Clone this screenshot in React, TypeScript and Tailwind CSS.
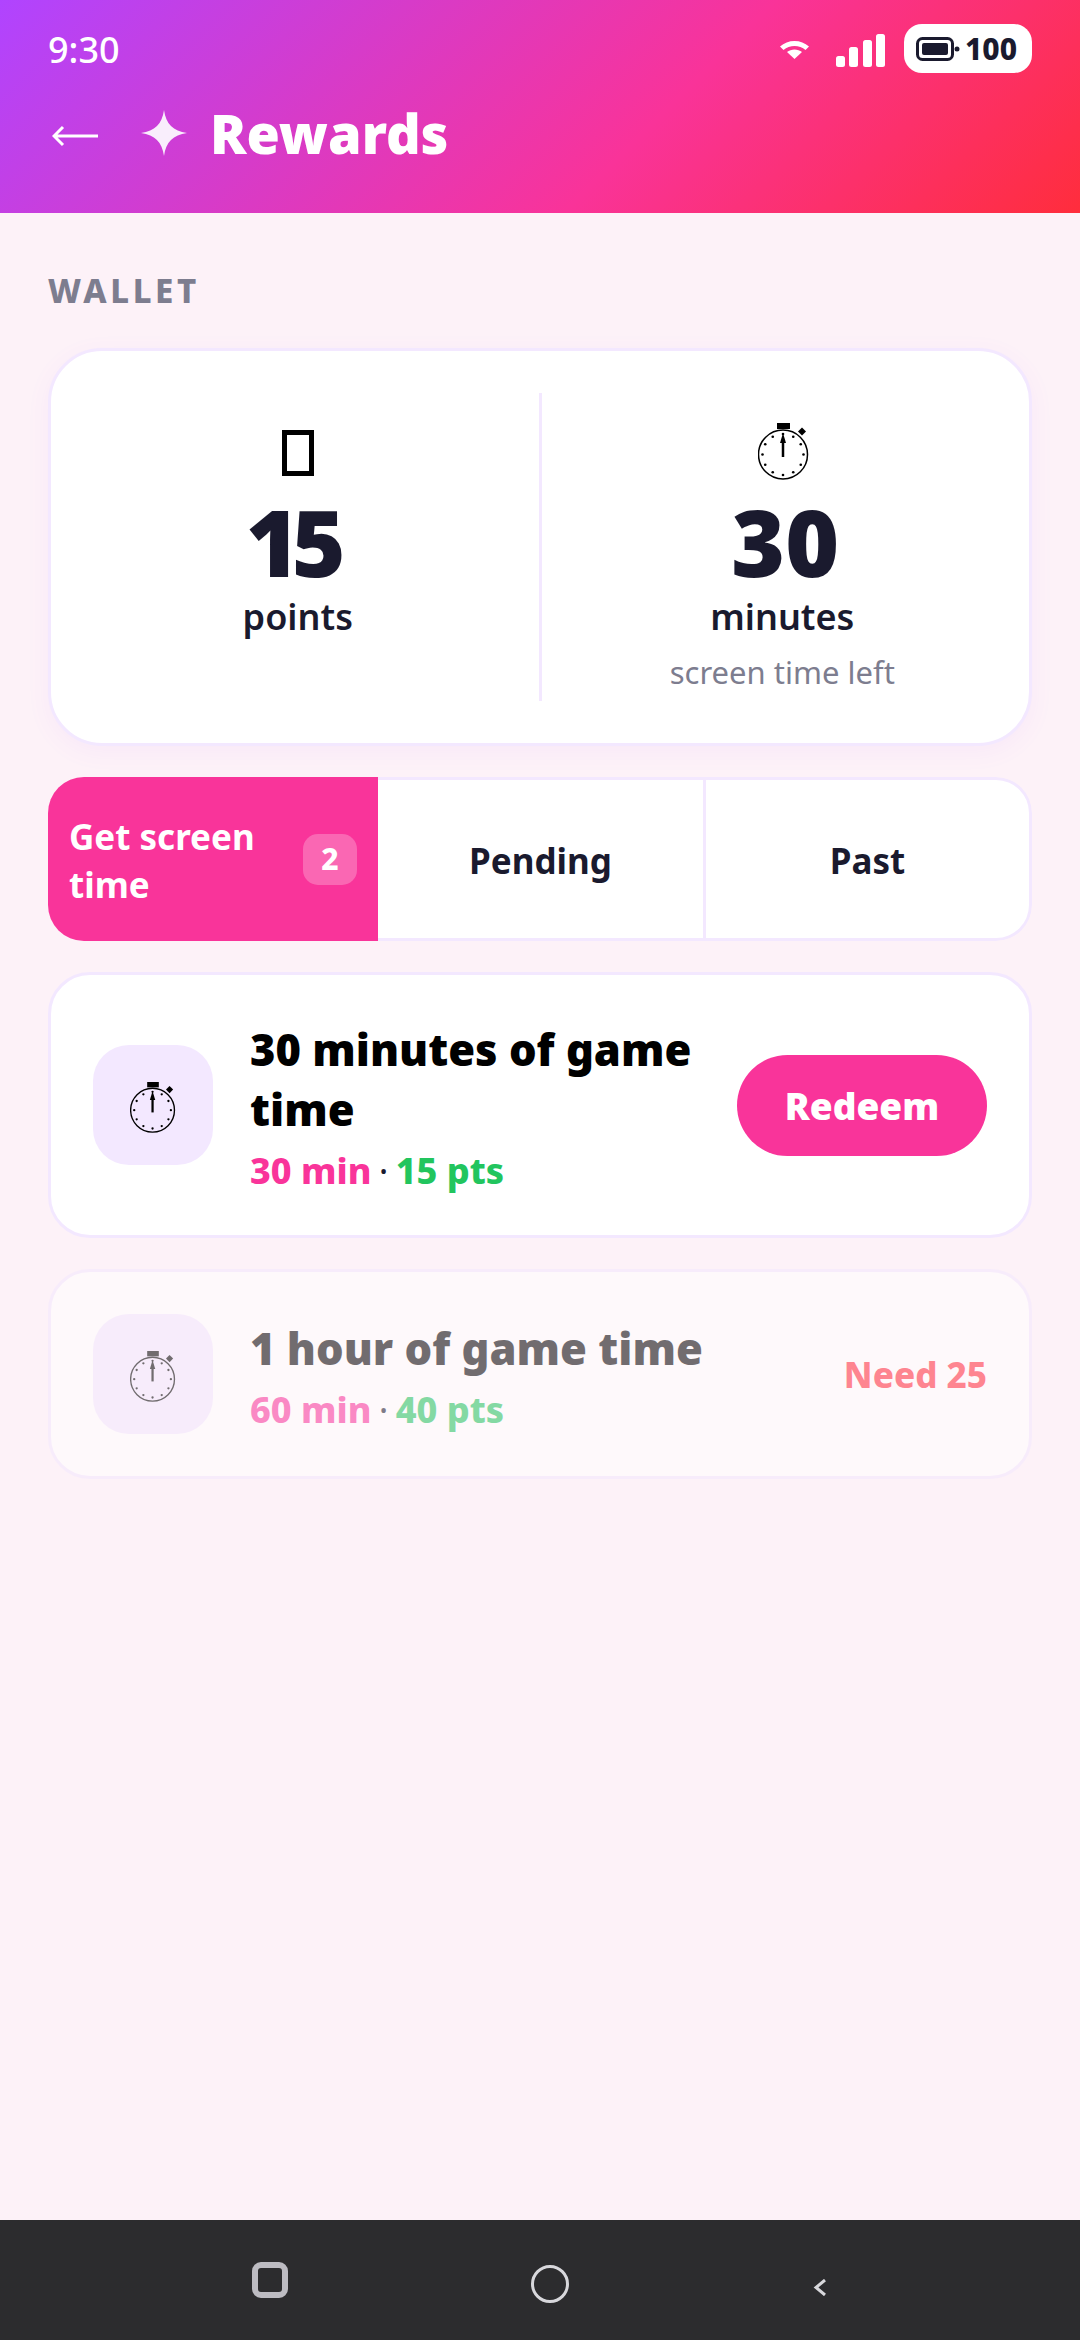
const font = "font-['Noto_Sans','Open_Sans',sans-serif]"

// clock face dots, 12 of them around the dial
const dots = Array.from({ length: 12 }, (_, i) => {
    const a = (i * Math.PI) / 6
    return [25 + 20.5 * Math.sin(a), 31.5 - 20.5 * Math.cos(a)]
})

const Stopwatch = ({ className = '' }: { className?: string }) => (
    <svg viewBox="0 0 51 57" className={className} fill="none" stroke="currentColor">
        <rect x="19" y="0" width="13" height="6" fill="currentColor" stroke="none" />
        <path d="M44 4.500l4 4-4 4-4-4z" fill="currentColor" stroke="none" />
        <circle cx="25" cy="31.500" r="24.500" strokeWidth="1.500" />
        <path d="M25 34V18" strokeWidth="2.500" />
        <path d="M25 10l-3 10h6z" fill="currentColor" stroke="none" />
        {dots.map(([cx, cy]) => (
            <circle key={`${cx}-${cy}`} cx={cx} cy={cy} r="1.300" fill="currentColor" stroke="none" />
        ))}
    </svg>
)

const StatusBar = () => (
    <div className="flex h-[100px] items-center justify-between pl-[48px]">
        <span className="text-[36px] leading-none font-medium text-white">9:30</span>
        <div className="flex items-center">
            <svg viewBox="0 0 29 18" className="h-[18px] w-[29px]" fill="white">
                <path d="M0 5.500C4 2 9 0 14.500 0S25 2 29 5.500l-3.500 3.500C22.500 6.500 18.500 5 14.500 5S6.500 6.500 3.500 9z" />
                <path d="M7 11c2-1.500 4.800-2.500 7.500-2.500S20 9.500 22 11l-7.500 7z" />
            </svg>
            <svg viewBox="0 0 49 33" className="ml-[27px] h-[33px] w-[49px]" fill="white">
                <rect x="0" y="22" width="9" height="11" rx="2.500" />
                <rect x="13" y="13" width="9" height="20" rx="2.500" />
                <rect x="27" y="6" width="9" height="27" rx="2.500" />
                <rect x="40" y="0" width="9" height="33" rx="2.500" />
            </svg>
            <div className="mb-[3px] ml-[19px] flex h-[49px] w-[128px] items-center rounded-[18px] bg-white pl-[12px]">
                <svg viewBox="0 0 44 24" className="h-[24px] w-[44px]">
                    <rect x="1.500" y="1.500" width="35" height="21" rx="5" fill="none" stroke="#1a1a2e" strokeWidth="3" />
                    <rect x="6" y="6" width="26" height="12" rx="2" fill="#1a1a2e" />
                    <circle cx="41" cy="12" r="2.500" fill="#1a1a2e" />
                </svg>
                <span className="ml-[5px] text-[30px] leading-none font-extrabold text-[#1a1a2e]">100</span>
            </div>
        </div>
    </div>
)

const Header = () => (
    <header className="h-[213px] bg-[linear-gradient(135deg,#b044ff_0%,#f93399_60%,#ff2d3c_100%)] pr-[48px]">
        <StatusBar />
        <div className="mt-[6px] flex items-center pl-[52px]">
            <svg viewBox="0 0 46 22" className="mt-[6px] h-[22px] w-[46px]" fill="none" stroke="white" strokeWidth="3">
                <path d="M2 11h44M11 2l-9 9 9 9" />
            </svg>
            <svg viewBox="0 0 46 46" className="ml-[43px] h-[46px] w-[46px]" fill="#f9eefc">
                <path d="M23 0c2 14 9 21 23 23-14 2-21 9-23 23-2-14-9-21-23-23 14-2 21-9 23-23z" />
            </svg>
            <h1 className="ml-[23px] text-[54px] leading-none font-black text-white">Rewards</h1>
        </div>
    </header>
)

const WalletCard = () => (
    <div className="mt-[35px] flex rounded-[54px] border-[3px] border-[#f3e8ff] bg-white px-[6px] py-[42px] shadow-[0_6px_24px_rgba(168,85,247,0.06)]">
        <div className="flex flex-1 flex-col items-center border-r-[3px] border-[#f3e8ff] pt-[30px]">
            <div className="mt-[7px] h-[46px] w-[32px] border-[5px] border-black" />
            <div className="mt-[18px] pr-[12px] text-[92px] leading-[96px] font-black tracking-[-8px] text-[#1a1a2e]">15</div>
            <div className="mt-[3px] text-[36px] leading-[48px] font-semibold text-[#1a1a2e]">points</div>
        </div>
        <div className="flex flex-1 flex-col items-center pt-[30px] pb-[6px]">
            <Stopwatch className="ml-[3px] h-[57px] w-[51px] text-black" />
            <div className="mt-[14px] pl-[6px] text-[92px] leading-[96px] font-black text-[#1a1a2e]">30</div>
            <div className="mt-[3px] text-[36px] leading-[48px] font-semibold text-[#1a1a2e]">minutes</div>
            <div className="mt-[9px] text-[31px] leading-[45px] text-[#7d7d8f]">screen time left</div>
        </div>
    </div>
)

const Tabs = () => (
    <div className="mt-[31px] flex h-[164px] overflow-hidden rounded-[36px] text-[35px] leading-[48px] font-bold">
        <div className="flex w-[330px] items-center justify-between bg-[#f9349a] px-[21px] text-white">
            <span className="w-[210px] pt-[3px]">Get screen time</span>
            <span className="flex h-[51px] w-[54px] items-center justify-center rounded-[15px] bg-white/25 text-[30px] leading-none font-extrabold">2</span>
        </div>
        <div className="flex w-[328px] items-center justify-center border-y-[3px] border-r-[3px] border-[#f3e8ff] bg-white pt-[3px] text-[#1a1a2e]">Pending</div>
        <div className="flex flex-1 items-center justify-center rounded-r-[36px] border-y-[3px] border-r-[3px] border-[#f3e8ff] bg-white pt-[3px] text-[#1a1a2e]">Past</div>
    </div>
)

const RewardCard = ({ title, min, pts, locked }: { title: string; min: string; pts: string; locked?: boolean }) => (
    <div className={`mt-[31px] flex items-center rounded-[42px] border-[3px] border-[#f3e8ff] bg-white p-[42px] ${locked ? 'opacity-55' : ''}`}>
        <div className="flex h-[120px] w-[120px] shrink-0 items-center justify-center rounded-[36px] bg-[#f3e8ff]">
            <Stopwatch className="mt-[5px] h-[51px] w-[46px] text-black" />
        </div>
        <div className="ml-[37px] min-w-0 flex-1 pt-[2px]">
            <div className="w-[460px] text-[43.500px] leading-[60px] font-black text-black">{title}</div>
            <div className="mt-[9px] text-[36px] leading-[45px] font-extrabold">
                <span className="text-[#f9349a]">{min}</span>
                <span className="mx-[-2px] font-normal text-[#1a1a2e]"> · </span>
                <span className="text-[#22c55e]">{pts}</span>
            </div>
        </div>
        {locked ? (
            <span className="text-[35px] leading-none font-extrabold text-[#ff2d3c]">Need 25</span>
        ) : (
            <button className="flex h-[101px] w-[250px] shrink-0 items-center justify-center rounded-full bg-[#f9349a] text-[37px] leading-none font-black text-white">Redeem</button>
        )}
    </div>
)

const NavBar = () => (
    <div className="flex h-[120px] items-start bg-[#2c2c2e]">
        <div className="mt-[42px] ml-[252px] h-[36px] w-[36px] rounded-[9px] border-[6px] border-[#bdbcc2]" />
        <div className="mt-[45px] ml-[243px] h-[38px] w-[38px] rounded-full border-[3px] border-[#d8d8dc]" />
        <svg viewBox="0 0 13 17" className="mt-[59px] ml-[244px] h-[17px] w-[13px]" fill="none" stroke="#d8d8dc" strokeWidth="3">
            <path d="M12 1L3 8.500l9 7.500" />
        </svg>
    </div>
)

export default function App() {
    return (
        <div className={`flex h-[2340px] w-[1080px] flex-col overflow-hidden bg-[#fdf2f8] ${font}`}>
            <Header />
            <main className="flex-1 px-[48px] pt-[55px]">
                <div className="text-[33px] leading-[45px] font-extrabold tracking-[3.600px] text-[#7d7d8f]">WALLET</div>
                <WalletCard />
                <Tabs />
                <RewardCard title="30 minutes of game time" min="30 min" pts="15 pts" />
                <RewardCard title="1 hour of game time" min="60 min" pts="40 pts" locked />
            </main>
            <NavBar />
        </div>
    )
}
